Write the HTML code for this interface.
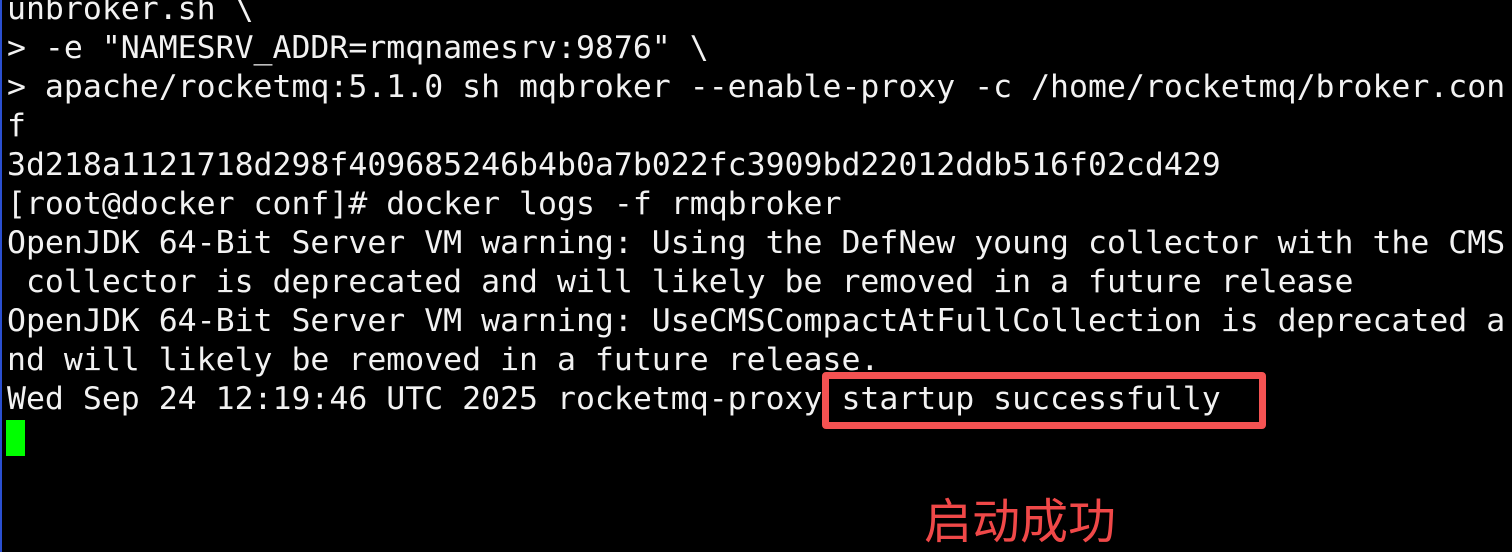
<!DOCTYPE html>
<html><head><meta charset="utf-8"><style>
html,body{margin:0;padding:0;background:#000;width:1512px;height:552px;overflow:hidden;position:relative}
.bl{position:absolute;left:0;top:0;width:2px;height:552px;background:#2a4fd0}
pre{position:absolute;left:7px;top:-10px;margin:0;font-family:"DejaVu Sans Mono","Liberation Mono",monospace;font-size:31.5px;line-height:39px;color:#f2f2f2;white-space:pre}
.box{position:absolute;left:822px;top:372px;width:430px;height:43px;border:7px solid #f45252;border-radius:4px}
.cur{position:absolute;left:6px;top:420px;width:19px;height:36px;background:#00ff00}
.cn{position:absolute;left:924px;top:489px;font-family:"Noto Sans CJK SC",sans-serif;font-size:48px;line-height:56px;color:#f04848}
</style></head><body>
<div class="bl"></div>
<pre>unbroker.sh \
&gt; -e "NAMESRV_ADDR=rmqnamesrv:9876" \
&gt; apache/rocketmq:5.1.0 sh mqbroker --enable-proxy -c /home/rocketmq/broker.con
f
3d218a1121718d298f409685246b4b0a7b022fc3909bd22012ddb516f02cd429
[root@docker conf]# docker logs -f rmqbroker
OpenJDK 64-Bit Server VM warning: Using the DefNew young collector with the CMS
 collector is deprecated and will likely be removed in a future release
OpenJDK 64-Bit Server VM warning: UseCMSCompactAtFullCollection is deprecated a
nd will likely be removed in a future release.
Wed Sep 24 12:19:46 UTC 2025 rocketmq-proxy startup successfully</pre>
<div class="box"></div>
<div class="cur"></div>
<div class="cn">启动成功</div>
</body></html>
